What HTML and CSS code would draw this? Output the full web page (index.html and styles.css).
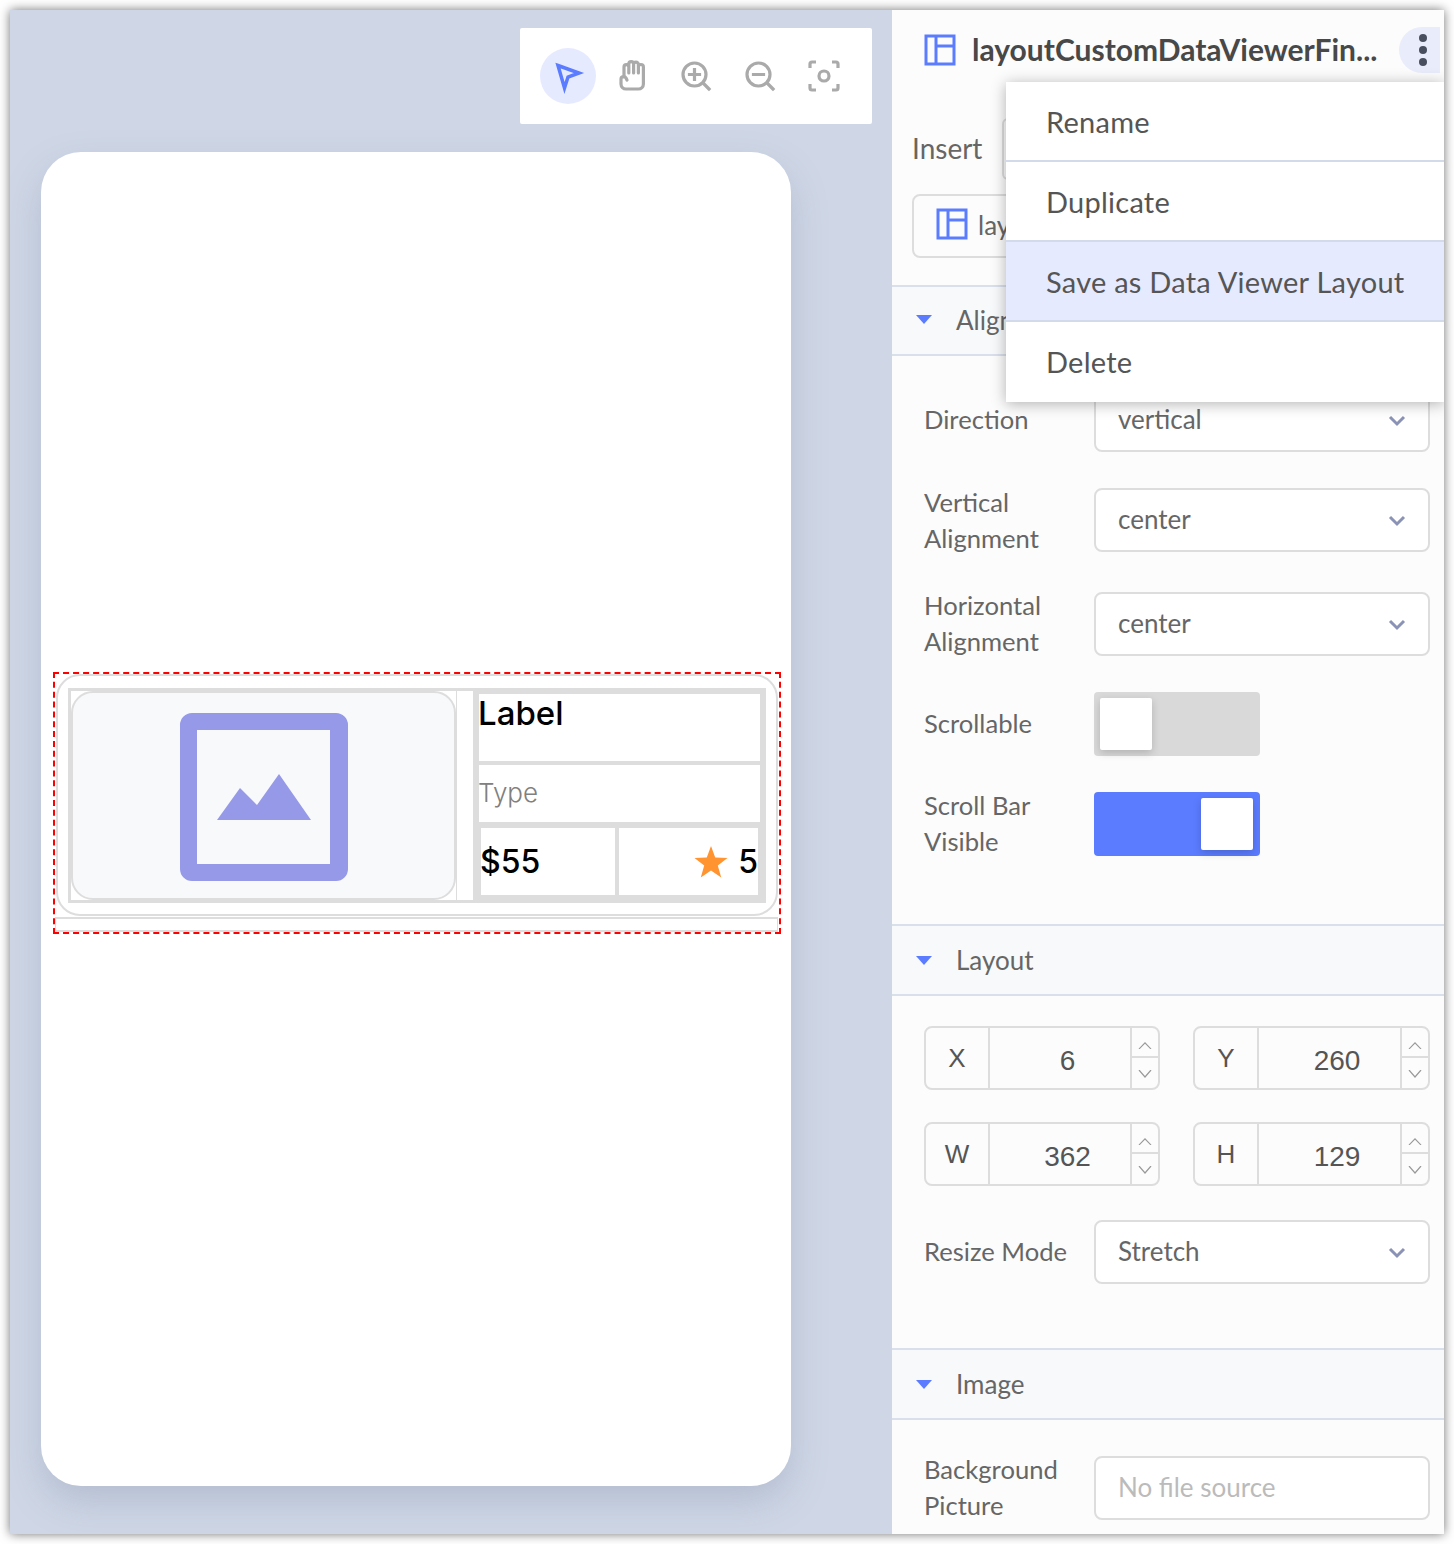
FILE: index.html
```html
<!DOCTYPE html>
<html lang="en">
<head>
    <meta charset="UTF-8">
    <title>Layout Editor</title>
    <link rel="stylesheet" href="styles.css">
</head>
<body>
    <div class="window">
        <div class="canvas">
            <div class="toolbar">
                <span class="tool tool-active">
                    <svg width="40" height="40" viewBox="0 0 40 40"><path d="M10 9.5 L31 17 L20 21 L16.5 32 Z" fill="none" stroke="#5b7cff" stroke-width="3.5" stroke-linejoin="miter"/></svg>
                </span>
                <span class="tool">
                    <svg width="40" height="40" viewBox="0 0 40 40" fill="none" stroke="#aaa" stroke-width="3.2" stroke-linecap="round" stroke-linejoin="round"><path d="M12 21 V11 a2.4 2.4 0 0 1 4.8 0 V8 a2.4 2.4 0 0 1 4.8 0 V8.5 a2.4 2.4 0 0 1 4.8 0 V11 a2.4 2.4 0 0 1 5 0 V28 a5 5 0 0 1 -5 5 H14 a5 5 0 0 1 -5 -5 V23 C9 20 13 20 14 22 L15 24 M16.8 10 V17 M21.6 9 V17 M26.4 9 V17"/></svg>
                </span>
                <span class="tool">
                    <svg width="40" height="40" viewBox="0 0 40 40" fill="none" stroke="#aaa" stroke-width="3.2" stroke-linecap="square"><circle cx="18.5" cy="18.5" r="11.5"/><path d="M27 27 L33 33 M18.5 13.5 V23.5 M13.5 18.5 H23.5"/></svg>
                </span>
                <span class="tool">
                    <svg width="40" height="40" viewBox="0 0 40 40" fill="none" stroke="#aaa" stroke-width="3.2" stroke-linecap="square"><circle cx="18.5" cy="18.5" r="11.5"/><path d="M27 27 L33 33 M13.5 18.5 H23.5"/></svg>
                </span>
                <span class="tool">
                    <svg width="40" height="40" viewBox="0 0 40 40" fill="none" stroke="#aaa" stroke-width="3.2"><circle cx="20" cy="20" r="5"/><path d="M6 12 V8 a2 2 0 0 1 2 -2 H12 M28 6 H32 a2 2 0 0 1 2 2 V12 M34 28 V32 a2 2 0 0 1 -2 2 H28 M12 34 H8 a2 2 0 0 1 -2 -2 V28"/></svg>
                </span>
            </div>

            <div class="phone">
                <div class="selection">
                    <div class="card">
                        <div class="card-row">
                            <div class="image-cell">
                                <div class="image-box">
                                    <svg width="168" height="168" viewBox="0 0 168 168"><path fill="#9699e8" fill-rule="evenodd" d="M12 0 H156 a12 12 0 0 1 12 12 V156 a12 12 0 0 1 -12 12 H12 a12 12 0 0 1 -12 -12 V12 a12 12 0 0 1 12 -12 Z M17 17 V151 H150 V17 Z"/><path fill="#9699e8" d="M37 107 L60 75 L77 92 L99 61 L131 107 Z"/></svg>
                                </div>
                                <div class="image-gap"></div>
                            </div>
                            <div class="info">
                                <div class="info-cell info-label">Label</div>
                                <div class="info-cell info-type">Type</div>
                                <div class="info-prices">
                                    <div class="price">$55</div>
                                    <div class="rating">
                                        <svg width="34" height="34" viewBox="0 0 34 34"><path fill="#ff9431" d="M17 1 L21.2 12.6 L33.5 13 L23.8 20.6 L27.2 32.5 L17 25.6 L6.8 32.5 L10.2 20.6 L0.5 13 L12.8 12.6 Z"/></svg>
                                        <span>5</span>
                                    </div>
                                </div>
                            </div>
                        </div>
                    </div>
                    <div class="strip"></div>
                </div>
            </div>
        </div>

        <div class="panel">
            <div class="panel-head">
                <svg class="layout-icon" width="32" height="32" viewBox="0 0 32 32"><path d="M2 2 H30 V30 H2 Z M12 2 V30 M12 12 H30" fill="none" stroke="#5b7cff" stroke-width="3"/></svg>
                <div class="panel-title">layoutCustomDataViewerFin...</div>
                <div class="kebab"><i></i><i></i><i></i></div>
            </div>

            <div class="insert-row">
                <div class="insert-label">Insert</div>
                <div class="insert-box"></div>
            </div>
            <div class="layer-box">
                <svg class="layout-icon" width="32" height="32" viewBox="0 0 32 32"><path d="M2 2 H30 V30 H2 Z M12 2 V30 M12 12 H30" fill="none" stroke="#5b7cff" stroke-width="3"/></svg>
                <span>lay</span>
            </div>

            <div class="section-head section-align"><b class="caret"></b>Alignment</div>

            <div class="form-row row-direction">
                <div class="form-label">Direction</div>
                <div class="select">vertical<svg class="chev" width="18" height="12" viewBox="0 0 18 12"><path d="M2 2 L9 9 L16 2" fill="none" stroke="#8a93b5" stroke-width="3"/></svg></div>
            </div>
            <div class="form-row gap-36">
                <div class="form-label label-low">Vertical<br>Alignment</div>
                <div class="select">center<svg class="chev" width="18" height="12" viewBox="0 0 18 12"><path d="M2 2 L9 9 L16 2" fill="none" stroke="#8a93b5" stroke-width="3"/></svg></div>
            </div>
            <div class="form-row gap-40">
                <div class="form-label">Horizontal<br>Alignment</div>
                <div class="select">center<svg class="chev" width="18" height="12" viewBox="0 0 18 12"><path d="M2 2 L9 9 L16 2" fill="none" stroke="#8a93b5" stroke-width="3"/></svg></div>
            </div>
            <div class="form-row gap-36">
                <div class="form-label">Scrollable</div>
                <div class="toggle"><i></i></div>
            </div>
            <div class="form-row gap-36">
                <div class="form-label">Scroll Bar<br>Visible</div>
                <div class="toggle toggle-on"><i></i></div>
            </div>

            <div class="section-head section-layout"><b class="caret"></b>Layout</div>

            <div class="num-grid">
                <div class="num"><span class="num-key">X</span><span class="num-val">6</span><span class="spin"><svg viewBox="0 0 14 8" preserveAspectRatio="none"><path d="M1 8 L7 1 L13 8" fill="none" stroke="#999" stroke-width="1.2"/></svg><svg viewBox="0 0 14 8" preserveAspectRatio="none"><path d="M1 0 L7 7 L13 0" fill="none" stroke="#999" stroke-width="1.2"/></svg></span></div>
                <div class="num"><span class="num-key">Y</span><span class="num-val">260</span><span class="spin"><svg viewBox="0 0 14 8" preserveAspectRatio="none"><path d="M1 8 L7 1 L13 8" fill="none" stroke="#999" stroke-width="1.2"/></svg><svg viewBox="0 0 14 8" preserveAspectRatio="none"><path d="M1 0 L7 7 L13 0" fill="none" stroke="#999" stroke-width="1.2"/></svg></span></div>
                <div class="num"><span class="num-key">W</span><span class="num-val">362</span><span class="spin"><svg viewBox="0 0 14 8" preserveAspectRatio="none"><path d="M1 8 L7 1 L13 8" fill="none" stroke="#999" stroke-width="1.2"/></svg><svg viewBox="0 0 14 8" preserveAspectRatio="none"><path d="M1 0 L7 7 L13 0" fill="none" stroke="#999" stroke-width="1.2"/></svg></span></div>
                <div class="num"><span class="num-key">H</span><span class="num-val">129</span><span class="spin"><svg viewBox="0 0 14 8" preserveAspectRatio="none"><path d="M1 8 L7 1 L13 8" fill="none" stroke="#999" stroke-width="1.2"/></svg><svg viewBox="0 0 14 8" preserveAspectRatio="none"><path d="M1 0 L7 7 L13 0" fill="none" stroke="#999" stroke-width="1.2"/></svg></span></div>
            </div>

            <div class="form-row row-resize">
                <div class="form-label">Resize Mode</div>
                <div class="select">Stretch<svg class="chev" width="18" height="12" viewBox="0 0 18 12"><path d="M2 2 L9 9 L16 2" fill="none" stroke="#8a93b5" stroke-width="3"/></svg></div>
            </div>

            <div class="section-head section-image"><b class="caret"></b>Image</div>

            <div class="form-row gap-36">
                <div class="form-label">Background<br>Picture</div>
                <div class="select select-empty">No file source</div>
            </div>

            <ul class="menu">
                <li>Rename</li>
                <li>Duplicate</li>
                <li class="menu-active">Save as Data Viewer Layout</li>
                <li>Delete</li>
            </ul>
        </div>
    </div>
</body>
</html>
```

FILE: styles.css
```css
* {
    box-sizing: border-box;
}
html, body {
    height: 1544px;
    overflow: hidden;
}
body {
    margin: 0;
    padding: 10px;
    background-color: #fff;
    font-family: "Lato", "Liberation Sans", sans-serif;
    color: #666;
}
.window {
    display: flex;
    width: 1434px;
    height: 1524px;
    overflow: hidden;
    box-shadow: 0 0 10px rgba(0, 0, 0, 0.55);
}

/* left side */
.canvas {
    width: 882px;
    flex-shrink: 0;
    background-color: #cfd7e6;
    padding: 18px 20px 0 31px;
    display: flex;
    flex-direction: column;
}
.toolbar {
    align-self: flex-end;
    width: 352px;
    height: 96px;
    background-color: #fff;
    border-radius: 2px;
    padding: 0 20px;
    display: flex;
    align-items: center;
}
.tool {
    width: 56px;
    height: 56px;
    margin-right: 8px;
    border-radius: 50%;
    display: flex;
    align-items: center;
    justify-content: center;
}
.tool:last-child {
    margin-right: 0;
}
.tool-active {
    background-color: #e6eaff;
}
.phone {
    position: relative;
    width: 750px;
    height: 1334px;
    margin-top: 28px;
    background-color: #fff;
    border-radius: 40px;
    box-shadow: 0 16px 36px rgba(110, 125, 155, 0.28);
}
.selection {
    position: absolute;
    left: 12px;
    top: 520px;
    width: 728px;
    height: 262px;
    border: 2px dashed #f00;
    display: flex;
    flex-direction: column;
}
.card {
    height: 242px;
    margin: 0 1px;
    border: 2px solid #ddd;
    border-radius: 24px;
    padding: 12px 0 0 10px;
}
.card-row {
    display: flex;
    width: 698px;
    height: 215px;
}
.image-cell {
    width: 405px;
    display: flex;
    border: 3px solid #ddd;
    border-right: none;
}
.image-box {
    width: 385px;
    padding-top: 2px;
    background-color: #f8f9fb;
    border: 2px solid #ddd;
    border-radius: 22px;
    display: flex;
    align-items: center;
    justify-content: center;
}
.image-gap {
    flex: 1;
    background-color: #fff;
    border-left: 1px solid #ddd;
}
.info {
    flex: 1;
    background-color: #ddd;
    padding: 6px 6px 8px;
    display: flex;
    flex-direction: column;
}
.info-cell {
    background-color: #fff;
    font-family: "Inter", "Liberation Sans", sans-serif;
    white-space: nowrap;
    text-indent: -1px;
}
.info-label {
    height: 67px;
    font-size: 33px;
    font-weight: 500;
    line-height: 38px;
    color: #000;
}
.info-type {
    height: 57px;
    margin-top: 4px;
    font-size: 26px;
    font-weight: 300;
    line-height: 56px;
    color: #808080;
}
.info-prices {
    display: flex;
    height: 67px;
    margin-top: 6px;
    padding: 0 2px;
    gap: 4px;
    font-family: "Inter", "Liberation Sans", sans-serif;
    font-size: 32px;
    font-weight: 500;
    color: #000;
}
.price {
    width: 134px;
    background-color: #fff;
    line-height: 68px;
    text-indent: -1px;
}
.rating {
    flex: 1;
    background-color: #fff;
    display: flex;
    align-items: center;
    justify-content: flex-end;
    gap: 10px;
}
.strip {
    height: 15px;
    margin-right: 1px;
    border-top: 2px solid #ddd;
    border-bottom: 2px solid #ddd;
    border-left: 1px solid #ddd;
    border-right: 1px solid #ddd;
    margin-top: 1px;
}

/* right side */
.panel {
    position: relative;
    flex: 1;
    background-color: #fcfcfc;
}
.panel-head {
    display: flex;
    align-items: center;
    height: 80px;
    padding-left: 32px;
}
.layout-icon {
    flex-shrink: 0;
}
.panel-title {
    margin-left: 16px;
    padding-bottom: 2px;
    flex: 1;
    font-size: 30px;
    font-weight: 700;
    color: #484848;
    white-space: nowrap;
}
.kebab {
    width: 41px;
    height: 46px;
    margin-right: 4px;
    border-radius: 23px 0 0 23px;
    background-color: #e9ecfb;
    display: flex;
    flex-direction: column;
    align-items: center;
    justify-content: center;
    gap: 4px;
    padding-left: 7px;
}
.kebab i {
    width: 8px;
    height: 8px;
    border-radius: 50%;
    background-color: #4a4f60;
}
.insert-row {
    display: flex;
    align-items: center;
    height: 62px;
    margin-top: 28px;
    padding-left: 20px;
}
.insert-label {
    width: 90px;
    padding-bottom: 3px;
    font-size: 28px;
}
.insert-box {
    flex: 1;
    height: 62px;
    margin-right: 14px;
    border: 2px solid #ddd;
    border-radius: 6px;
}
.layer-box {
    display: flex;
    align-items: center;
    height: 64px;
    margin: 14px 14px 0 20px;
    padding-left: 22px;
    border: 2px solid #ddd;
    border-radius: 8px;
    font-size: 26px;
    white-space: nowrap;
}
.layer-box .layout-icon {
    margin-bottom: 4px;
}
.layer-box span {
    margin-left: 10px;
    padding-bottom: 2px;
}
.section-head {
    display: flex;
    align-items: center;
    height: 71px;
    padding-left: 24px;
    padding-bottom: 2px;
    background-color: #f8f9fb;
    border-top: 2px solid #d9e0ec;
    border-bottom: 2px solid #d9e0ec;
    font-size: 26px;
}
.caret {
    width: 0;
    height: 0;
    margin-right: 24px;
    border-left: 8px solid transparent;
    border-right: 8px solid transparent;
    border-top: 9px solid #5b7cff;
}
.section-align {
    margin-top: 27px;
}
.section-layout {
    margin-top: 68px;
    height: 72px;
    padding-bottom: 0;
}
.section-image {
    margin-top: 64px;
    height: 72px;
    padding-bottom: 0;
}
.form-row {
    display: flex;
    align-items: center;
    height: 64px;
    padding-left: 32px;
}
.form-label {
    width: 170px;
    flex-shrink: 0;
    padding-bottom: 2px;
    font-size: 25.6px;
    line-height: 36px;
}
.label-low {
    padding-bottom: 0;
}
.gap-36 {
    margin-top: 36px;
}
.gap-40 {
    margin-top: 40px;
}
.row-direction {
    margin-top: 32px;
}
.row-resize {
    margin-top: 34px;
}
.select {
    position: relative;
    width: 336px;
    height: 64px;
    padding-left: 22px;
    border: 2px solid #ddd;
    border-radius: 8px;
    background-color: #fff;
    font-size: 26px;
    line-height: 58px;
}
.select-empty {
    color: #bbb;
}
.chev {
    position: absolute;
    right: 22px;
    top: 25px;
}
.toggle {
    width: 166px;
    height: 64px;
    padding: 6px 7px 6px 6px;
    background-color: #d9d9d9;
    border-radius: 4px;
    display: flex;
}
.toggle i {
    width: 52px;
    height: 52px;
    background-color: #fff;
    border-radius: 2px;
    box-shadow: 0 3px 8px rgba(0, 0, 0, 0.18);
}
.toggle-on {
    background-color: #5b7cff;
    justify-content: flex-end;
}
.num-grid {
    display: grid;
    grid-template-columns: 236px 237px;
    column-gap: 33px;
    row-gap: 32px;
    margin-top: 30px;
    padding-left: 32px;
}
.num {
    display: flex;
    height: 64px;
    border: 2px solid #ddd;
    border-radius: 8px;
    font-family: "Liberation Sans", sans-serif;
    color: #555;
}
.num-key {
    width: 64px;
    border-right: 2px solid #ddd;
    font-size: 26px;
    line-height: 61px;
    text-align: center;
}
.num-val {
    flex: 1;
    padding-left: 15px;
    font-size: 28px;
    line-height: 65px;
    text-align: center;
}
.spin {
    width: 28px;
    border-left: 2px solid #ddd;
    display: grid;
    grid-template-rows: 1fr 1fr;
}
.spin svg {
    width: 100%;
    height: 100%;
    padding: 12px 6px 10px;
}
.spin svg:first-child {
    padding: 14px 6px 7px;
    border-bottom: 2px solid #ddd;
}

/* dropdown */
.menu {
    position: absolute;
    right: 0;
    top: 72px;
    width: 438px;
    margin: 0;
    padding: 0;
    list-style-type: none;
    background-color: #fff;
    box-shadow: 0 2px 14px rgba(0, 0, 0, 0.3);
}
.menu li {
    height: 80px;
    padding-left: 40px;
    border-bottom: 2px solid #d3daea;
    font-size: 29px;
    letter-spacing: 0.25px;
    line-height: 80px;
    color: #555;
}
.menu li:last-child {
    border-bottom: none;
}
.menu-active {
    background-color: #e6eaff;
    border-top: 2px solid #d3daea;
    margin-top: -2px;
    height: 82px !important;
}
```
